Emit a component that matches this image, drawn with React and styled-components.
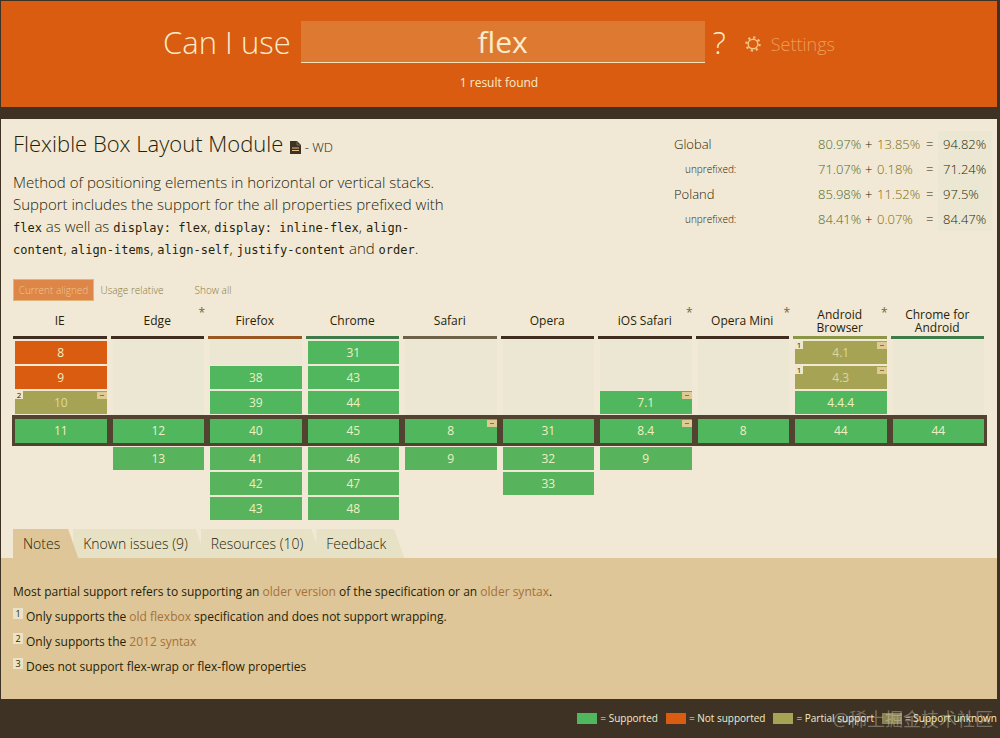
import React from "react";
import styled, { createGlobalStyle, css } from "styled-components";

const c = {
  dark: "#3d3224",
  orange: "#d95c10",
  cream: "#f2e8d6",
  tan: "#dfc698",
  ink: "#261f06",
  green: "#50b75e",
  olive: "#a6a355",
  link: "#a4713a",
  faint: "#ece7d2",
  tab: "#e7e2c6",
};

const Global = createGlobalStyle`
  * { box-sizing: border-box; }
  body {
    margin: 0;
    background: ${c.dark};
    color: ${c.ink};
    font-family: "Open Sans", sans-serif;
    font-size: 14px;
    font-weight: 300;
  }
`;

const Page = styled.div`
  padding: 1px 3px 0 1px;
`;

const Header = styled.header`
  background: ${c.orange};
  height: 106px;
  padding-top: 20px;
  margin-bottom: 12px;
  color: #f8eccb;
  text-align: center;
`;

const SearchForm = styled.form`
  display: flex;
  justify-content: center;
  align-items: center;
  height: 42px;
`;

const SearchLabel = styled.label`
  font-size: 31px;
  line-height: 42px;
  margin-right: 10px;
`;

const SearchInput = styled.input`
  width: 404px;
  height: 42px;
  padding: 0;
  border: 0;
  border-bottom: 1px solid #f8e3b8;
  border-radius: 0;
  background: #de7932;
  color: #f8eccb;
  font: 400 30px "Open Sans", sans-serif;
  text-align: center;
  outline: none;
`;

const QuestionMark = styled.span`
  font-size: 31px;
  line-height: 42px;
  margin: 0 18px 0 8px;
`;

const SettingsButton = styled.button`
  display: flex;
  align-items: center;
  gap: 9px;
  padding: 4px 0 0;
  border: 0;
  background: none;
  color: #ec9c58;
  font: 300 18px/24px "Open Sans", sans-serif;
`;

const ResultCount = styled.p`
  margin: 11px 0 0;
  font-size: 12px;
  font-weight: 400;
  line-height: 18px;
`;

const Feature = styled.main`
  background: ${c.cream};
`;

const Intro = styled.section`
  display: flex;
  justify-content: space-between;
  padding: 9px 5px 0 12px;
`;

const Summary = styled.div`
  width: 436px;
`;

const Title = styled.h1`
  margin: 0;
  font-size: 22px;
  font-weight: 300;
  line-height: 30px;
  white-space: nowrap;
`;

const SpecLink = styled.a`
  margin-left: 7px;
  color: inherit;
  font-size: 13px;
  text-decoration: none;
`;

const Description = styled.p`
  margin: 9px 0 0;
  font-size: 15px;
  line-height: 22px;

  code {
    font-family: "DejaVu Sans Mono", monospace;
    font-size: 12px;
    font-weight: 400;
    line-height: 16px;
  }
`;

const Stats = styled.table`
  width: 318px;
  height: 100px;
  margin-top: 3px;
  border-collapse: collapse;
  table-layout: fixed;
  font-size: 13px;
  line-height: 20px;

  td,
  th {
    height: 25px;
    padding: 0;
    text-align: left;
    font-weight: 300;
  }
`;

const Region = styled.th`
  width: 144px;
  ${(p) => p.$sub && css`&& { padding-left: 11px; font-size: 10px; }`}
`;

const Full = styled.td`
  width: 47px;
  color: #4c6b1c;
`;

const Partial = styled.td`
  width: 49px;
  color: #746c14;
`;

const Sign = styled.td`
  width: 12px;
`;

const Total = styled.td`
  && { padding-left: 5px; }
  background: ${c.faint};
`;

const Filters = styled.div`
  display: flex;
  align-items: center;
  padding: 20px 12px 0;
`;

const FilterButton = styled.button`
  height: 22px;
  width: ${(p) => p.$w}px;
  margin-right: ${(p) => p.$gap || 0}px;
  padding: 0;
  border: ${(p) => (p.$active ? "1px solid #dfb57a" : "0")};
  background: ${(p) => (p.$active ? "#dd8648" : "none")};
  color: ${(p) => (p.$active ? "#f0c590" : "#857b3c")};
  font: 300 10px "Open Sans", sans-serif;
  white-space: nowrap;
`;

const Support = styled.div`
  padding: 4px 10px 0 11px;
`;

const SupportTable = styled.table`
  width: 100%;
  border-collapse: separate;
  border-spacing: 0;
  table-layout: fixed;
  text-align: center;
`;

const Browser = styled.th`
  position: relative;
  padding: 0 3px 1px 1px;
  font-size: 12px;
  font-weight: 400;
  line-height: 13px;
`;

const BrowserName = styled.span`
  display: flex;
  align-items: center;
  justify-content: center;
  height: 34px;
  padding: 0 8px;
  border-bottom: 3px solid ${(p) => p.$bar};
`;

const Star = styled.span`
  position: absolute;
  top: 1px;
  right: 2px;
  color: #6f6837;
`;

const Row = styled.tr`
  ${(p) => p.$current && css`background: #514330;`}
`;

const Cell = styled.td`
  height: ${(p) => (p.$current ? 31 : 25)}px;
  padding: ${(p) => (p.$current ? "4px 3px 3px" : "1px 3px")};
`;

const fills = { y: c.green, n: c.orange, a: c.olive, f: "#58b45c", e: c.faint };

const Version = styled.div`
  position: relative;
  height: ${(p) => (p.$current ? 24 : 23)}px;
  background: ${(p) => fills[p.$kind]};
  color: ${(p) => (p.$kind === "a" ? "#ddd7a0" : "#eff0c2")};
  font-size: 12px;
  font-weight: 400;
  line-height: 24px;
  ${(p) => p.$kind === "e" && css`height: 25px; margin: -1px 0;`}
`;

const NoteMark = styled.span`
  position: absolute;
  top: 0;
  left: 0;
  width: 8px;
  height: 8px;
  background: #efe8cc;
  color: ${c.ink};
  font-size: 8px;
  line-height: 8px;
`;

const PrefixMark = styled.span`
  position: absolute;
  top: 1px;
  right: 0;
  width: 10px;
  height: 7px;
  background: #decb94;

  &::after {
    content: "";
    position: absolute;
    top: 3px;
    left: 3px;
    width: 4px;
    height: 1px;
    background: #8a7440;
  }
`;

const Tabs = styled.nav`
  display: flex;
  padding: 8px 12px 0;
`;

const Tab = styled.button`
  position: relative;
  z-index: ${(p) => p.$z};
  height: 29px;
  padding: 0 18px 0 10px;
  border: 0;
  background: ${(p) => (p.$active ? c.tan : c.tab)};
  color: ${c.ink};
  font: 300 14px/29px "Open Sans", sans-serif;
  white-space: nowrap;
  clip-path: polygon(0 0, calc(100% - 10px) 0, 100% 100%, 0 100%);

  & + & {
    margin-left: -5px;
  }
`;

const Notes = styled.section`
  min-height: 141px;
  padding: 21px 12px 20px;
  background: ${c.tan};
  font-size: 12px;
  font-weight: 400;
  line-height: 25px;

  p,
  ol {
    margin: 0;
    padding: 0;
    list-style: none;
  }

  a {
    color: ${c.link};
    text-decoration: none;
  }
`;

const Note = styled.li`
  display: flex;
  gap: 3px;
`;

const NoteNumber = styled.span`
  flex: none;
  width: 10px;
  height: 11px;
  margin-top: 4px;
  background: #ece3c6;
  font-size: 9px;
  line-height: 11px;
  text-align: center;
`;

const Legend = styled.footer`
  position: relative;
  display: flex;
  justify-content: flex-end;
  gap: 8px;
  height: 39px;
  color: #f4ecc8;
  font-size: 10px;
  font-weight: 400;
  line-height: 41px;
  white-space: nowrap;
`;

const LegendItem = styled.span`
  display: flex;
  align-items: center;
  gap: 3px;
`;

const Swatch = styled.i`
  width: 20px;
  height: 11px;
  background: ${(p) => p.$color};
`;

const Watermark = styled.span`
  position: absolute;
  right: 4px;
  top: 6px;
  color: rgba(240, 232, 214, 0.35);
  font: 400 18px/28px "Open Sans", "Noto Sans CJK SC", sans-serif;
`;

const Gear = () => (
  <svg width="18" height="18" viewBox="0 0 18 18" fill="none" stroke="#f3c583" aria-hidden="true">
    <circle cx="9" cy="9" r="4.8" strokeWidth="1.4" />
    <circle cx="9" cy="9" r="6.6" strokeWidth="2.2" strokeDasharray="2.2 2.98" />
  </svg>
);

const DocIcon = styled.svg`
  vertical-align: -2px;
`;

const Doc = () => (
  <DocIcon width="11" height="13" viewBox="0 0 11 13" aria-hidden="true">
    <path d="M0 0h7L11 4V13H0z" fill={c.dark} />
    <path d="M7 0.5V4h3.5" fill="none" stroke="#a08a64" strokeWidth="0.7" />
    <path d="M2 7h7M2 9.5h7" stroke="#e6c08a" strokeWidth="1.1" />
  </DocIcon>
);

const stats = [
  ["Global", "80.97%", "13.85%", "94.82%"],
  ["unprefixed:", "71.07%", "0.18%", "71.24%"],
  ["Poland", "85.98%", "11.52%", "97.5%"],
  ["unprefixed:", "84.41%", "0.07%", "84.47%"],
];

const browsers = [
  ["IE", "#3f2d20"],
  ["Edge", "#3f2d20", true],
  ["Firefox", "#9a571f"],
  ["Chrome", "#3f7a4a"],
  ["Safari", "#6d6249"],
  ["Opera", "#3f2d20"],
  ["iOS Safari", "#3f2d20", true],
  ["Opera Mini", "#3f2d20", true],
  ["Android Browser", "#8a9545", true],
  ["Chrome for Android", "#3f7a4a"],
];

const E = { k: "e" };
const v = (k, t, note, prefix) => ({ k, t, note, prefix });

const rows = [
  [v("n", "8"), E, E, v("y", "31"), E, E, E, E, v("a", "4.1", "1", true), E],
  [v("n", "9"), E, v("y", "38"), v("y", "43"), E, E, E, E, v("a", "4.3", "1", true), E],
  [v("a", "10", "2", true), E, v("y", "39"), v("y", "44"), E, E, v("y", "7.1", "", true), E, v("y", "4.4.4"), E],
  [v("y", "11"), v("y", "12"), v("y", "40"), v("y", "45"), v("y", "8", "", true), v("y", "31"), v("y", "8.4", "", true), v("y", "8"), v("y", "44"), v("y", "44")],
  [null, v("f", "13"), v("f", "41"), v("f", "46"), v("f", "9"), v("f", "32"), v("f", "9"), null, null, null],
  [null, null, v("f", "42"), v("f", "47"), null, v("f", "33"), null, null, null, null],
  [null, null, v("f", "43"), v("f", "48"), null, null, null, null, null, null],
];

const tabs = ["Notes", "Known issues (9)", "Resources (10)", "Feedback"];

const legend = [
  [c.green, "= Supported"],
  [c.orange, "= Not supported"],
  [c.olive, "= Partial support"],
  ["#8a8253", "= Support unknown"],
];

export default function App() {
  return (
    <Page>
      <Global />
      <Header>
        <SearchForm onSubmit={(e) => e.preventDefault()}>
          <SearchLabel htmlFor="search">Can I use</SearchLabel>
          <SearchInput id="search" type="text" defaultValue="flex" />
          <QuestionMark>?</QuestionMark>
          <SettingsButton type="button">
            <Gear />
            Settings
          </SettingsButton>
        </SearchForm>
        <ResultCount>1 result found</ResultCount>
      </Header>

      <Feature>
        <Intro>
          <Summary>
            <Title>
              Flexible Box Layout Module
              <SpecLink href="#spec">
                <Doc /> - WD
              </SpecLink>
            </Title>
            <Description>
              Method of positioning elements in horizontal or vertical stacks. Support includes the
              support for the all properties prefixed with <code>flex</code> as well as{" "}
              <code>display: flex</code>, <code>display: inline-flex</code>,{" "}
              <code>align-content</code>, <code>align-items</code>, <code>align-self</code>,{" "}
              <code>justify-content</code> and <code>order</code>.
            </Description>
          </Summary>
          <Stats>
            <tbody>
              {stats.map(([name, full, partial, total], i) => (
                <tr key={i}>
                  <Region scope="row" $sub={i % 2 === 1}>{name}</Region>
                  <Full>{full}</Full>
                  <Sign>+</Sign>
                  <Partial>{partial}</Partial>
                  <Sign>=</Sign>
                  <Total>{total}</Total>
                </tr>
              ))}
            </tbody>
          </Stats>
        </Intro>

        <Filters>
          <FilterButton type="button" $active $w={81} $gap={6}>Current aligned</FilterButton>
          <FilterButton type="button" $w={64} $gap={30}>Usage relative</FilterButton>
          <FilterButton type="button" $w={38}>Show all</FilterButton>
        </Filters>

        <Support>
          <SupportTable>
            <thead>
              <tr>
                {browsers.map(([name, bar, star]) => (
                  <Browser key={name} scope="col">
                    <BrowserName $bar={bar}>{name}</BrowserName>
                    {star && <Star>*</Star>}
                  </Browser>
                ))}
              </tr>
            </thead>
            <tbody>
              {rows.map((row, r) => (
                <Row key={r} $current={r === 3}>
                  {row.map((cell, i) => (
                    <Cell key={i} $current={r === 3}>
                      {cell && (
                        <Version $kind={cell.k} $current={r === 3}>
                          {cell.t}
                          {cell.note && <NoteMark>{cell.note}</NoteMark>}
                          {cell.prefix && <PrefixMark />}
                        </Version>
                      )}
                    </Cell>
                  ))}
                </Row>
              ))}
            </tbody>
          </SupportTable>
        </Support>

        <Tabs>
          {tabs.map((name, i) => (
            <Tab key={name} type="button" $active={i === 0} $z={tabs.length - i}>
              {name}
            </Tab>
          ))}
        </Tabs>

        <Notes>
          <p>
            Most partial support refers to supporting an <a href="#older-version">older version</a> of
            the specification or an <a href="#older-syntax">older syntax</a>.
          </p>
          <ol>
            <Note>
              <NoteNumber>1</NoteNumber>
              <span>
                Only supports the <a href="#old-flexbox">old flexbox</a> specification and does not
                support wrapping.
              </span>
            </Note>
            <Note>
              <NoteNumber>2</NoteNumber>
              <span>
                Only supports the <a href="#syntax-2012">2012 syntax</a>
              </span>
            </Note>
            <Note>
              <NoteNumber>3</NoteNumber>
              <span>Does not support flex-wrap or flex-flow properties</span>
            </Note>
          </ol>
        </Notes>
      </Feature>

      <Legend>
        {legend.map(([color, label]) => (
          <LegendItem key={label}>
            <Swatch $color={color} />
            {label}
          </LegendItem>
        ))}
        <Watermark>@稀土掘金技术社区</Watermark>
      </Legend>
    </Page>
  );
}
